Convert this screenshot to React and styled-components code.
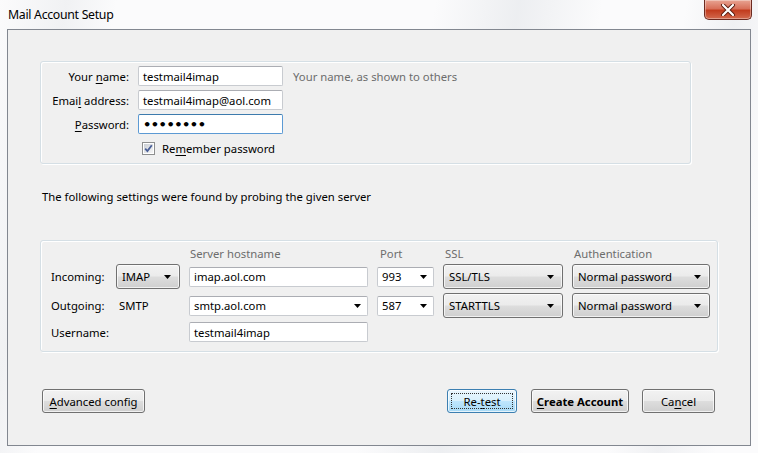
import React from 'react';
import styled, { createGlobalStyle, css } from 'styled-components';

const GlobalStyle = createGlobalStyle`
  html, body {
    margin: 0;
    padding: 0;
    background: #ffffff;
  }
  * { box-sizing: border-box; }
`;

const uiFont = `"Noto Sans", "Open Sans", Arial, sans-serif`;

const Window = styled.div`
  width: 758px;
  height: 453px;
  display: flex;
  flex-direction: column;
  font-family: ${uiFont};
  font-size: 11.3px;
  color: #000;
  background:
    linear-gradient(100deg, rgba(255,255,255,0) 0%, rgba(230,232,235,0.5) 8%, rgba(255,255,255,0) 14%,
      rgba(255,255,255,0) 52%, rgba(225,228,232,0.55) 62%, rgba(255,255,255,0) 72%,
      rgba(255,255,255,0) 82%, rgba(228,230,234,0.5) 88%, rgba(255,255,255,0) 95%),
    #fbfbfc;
`;

const TitleBar = styled.div`
  height: 29px;
  display: flex;
  align-items: flex-start;
  justify-content: space-between;
  padding: 0 6px 0 8px;
`;

const Title = styled.div`
  margin-top: 6px;
  font-size: 12.3px;
  letter-spacing: -0.3px;
  color: #000;
`;

const CloseButton = styled.div`
  width: 48px;
  height: 20px;
  border: 1px solid #6b2a20;
  border-top: none;
  border-radius: 0 0 5px 5px;
  background: linear-gradient(#e8a493 0%, #d8705a 45%, #c23c1e 55%, #d36a4e 100%);
  box-shadow: inset 0 0 0 1px rgba(255,255,255,0.35);
  display: flex;
  align-items: center;
  justify-content: center;
`;

const Client = styled.div`
  flex: 1;
  margin: 0 7px 7px 7px;
  border: 1px solid #828790;
  background: #f0f0f0;
  display: flex;
  flex-direction: column;
  padding: 31px 32px 0 32px;
`;

const GroupBox = styled.div`
  border: 1px solid #d5dfe5;
  border-radius: 3px;
  box-shadow: inset 1px 1px 0 #fff, 1px 1px 0 #fff;
  width: ${p => p.$width}px;
  height: ${p => p.$height}px;
`;

const IdentityGrid = styled.div`
  display: grid;
  grid-template-columns: 88px 145px auto;
  grid-auto-rows: 20px;
  column-gap: 9px;
  row-gap: 4px;
  padding-top: 4px;
  align-items: center;
`;

const Label = styled.div`
  text-align: ${p => (p.$right ? 'right' : 'left')};
  white-space: nowrap;
  color: #000;
`;

const Hint = styled.div`
  color: #6d6d6d;
  padding-left: 1px;
  white-space: nowrap;
`;

const TextBox = styled.div`
  height: 20px;
  background: #fff;
  border: 1px solid ${p => (p.$focused ? '#5c9ad4' : '#c8cbd0')};
  border-top-color: ${p => (p.$focused ? '#3d7bad' : '#abadb3')};
  border-radius: 2px;
  display: flex;
  align-items: center;
  padding: 0 4px;
  white-space: nowrap;
  overflow: hidden;
  ${p => p.$combo && css`justify-content: space-between; padding-right: 6px;`}
`;

const Dots = styled.span`
  font-size: 13px;
  font-weight: bold;
  letter-spacing: -0.5px;
  font-family: "DejaVu Sans", sans-serif;
`;

const CheckRow = styled.div`
  grid-column: 2 / 4;
  display: flex;
  align-items: center;
  gap: 7px;
  padding-left: 4px;
  margin-top: 1px;
`;

const Note = styled.div`
  margin-top: 22px;
  padding-left: 2px;
  height: 20px;
  display: flex;
  align-items: center;
`;

const ServerGroup = styled(GroupBox)`
  margin-top: 34px;
  padding: 5px 0 0 10px;
`;

const ServerGrid = styled.div`
  display: grid;
  grid-template-columns: 56px 64px 179px 57px 120px 138px;
  grid-template-rows: 14px 25px 25px 20px;
  column-gap: 9px;
  row-gap: 4px;
  align-items: center;
`;

const HeaderCell = styled.div`
  grid-column: ${p => p.$col};
  color: #6d6d6d;
  white-space: nowrap;
  padding-left: ${p => p.$pad || 1}px;
`;

const DropButton = styled.div`
  height: 25px;
  border: 1px solid #707070;
  border-radius: 3px;
  background: linear-gradient(#f2f2f2 0%, #ebebeb 48%, #dddddd 52%, #cfcfcf 100%);
  box-shadow: inset 0 0 0 1px rgba(255,255,255,0.7);
  display: flex;
  align-items: center;
  justify-content: space-between;
  padding: 0 8px 0 5px;
  white-space: nowrap;
`;

const Arrow = () => (
  <svg width="7" height="4" viewBox="0 0 7 4">
    <path d="M0 0 H7 L3.5 4 Z" fill="#000" />
  </svg>
);

const ButtonRow = styled.div`
  margin-top: 37px;
  margin-left: 2px;
  display: flex;
  align-items: center;
`;

const PushButton = styled.div`
  height: 24px;
  width: ${p => p.$width}px;
  margin-left: ${p => p.$gap || 0}px;
  border: 1px solid ${p => (p.$focused ? '#3c7fb1' : '#707070')};
  border-radius: 3px;
  background: ${p => (p.$focused
    ? 'linear-gradient(#eaf6fd 0%, #d9f0fc 48%, #bee6fd 52%, #a7d9f5 100%)'
    : 'linear-gradient(#f2f2f2 0%, #ebebeb 48%, #dddddd 52%, #cfcfcf 100%)')};
  box-shadow: inset 0 0 0 1px rgba(255,255,255,0.7);
  display: flex;
  align-items: center;
  justify-content: center;
  white-space: nowrap;
  font-weight: ${p => (p.$bold ? 'bold' : 'normal')};
  position: relative;
  ${p => p.$focused && css`
    &::after {
      content: '';
      position: absolute;
      inset: 3px;
      border: 1px dotted #333;
    }
  `}
`;

const Spacer = styled.div`
  flex: 1;
`;

const U = styled.span`
  text-decoration: underline;
  text-underline-offset: 2px;
`;

const CloseGlyph = () => (
  <svg width="16" height="12" viewBox="0 0 16 12">
    <path d="M3 1 L13 11 M13 1 L3 11" stroke="#5a1c10" strokeWidth="4" strokeLinecap="round" />
    <path d="M3 1 L13 11 M13 1 L3 11" stroke="#fff" strokeWidth="2.2" strokeLinecap="round" />
  </svg>
);

const CheckBox = () => (
  <svg width="13" height="13" viewBox="0 0 13 13">
    <defs>
      <linearGradient id="cbg" x1="0" y1="0" x2="1" y2="1">
        <stop offset="0" stopColor="#cbcfd5" />
        <stop offset="1" stopColor="#f6f6f6" />
      </linearGradient>
    </defs>
    <rect x="0.5" y="0.5" width="12" height="12" fill="#fff" stroke="#8e8f8f" />
    <rect x="2" y="2" width="9" height="9" fill="url(#cbg)" />
    <path d="M3.2 6.6 L5.4 9 L9.8 3.2" fill="none" stroke="#4a5f97" strokeWidth="1.8" />
  </svg>
);

export default function App() {
  return (
    <>
      <GlobalStyle />
      <Window>
        <TitleBar>
          <Title>Mail Account Setup</Title>
          <CloseButton><CloseGlyph /></CloseButton>
        </TitleBar>
        <Client>
          <GroupBox $width={651} $height={103}>
            <IdentityGrid>
              <Label $right>Your <U>n</U>ame:</Label>
              <TextBox>testmail4imap</TextBox>
              <Hint>Your name, as shown to others</Hint>

              <Label $right>Emai<U>l</U> address:</Label>
              <TextBox>testmail4imap@aol.com</TextBox>
              <div />

              <Label $right><U>P</U>assword:</Label>
              <TextBox $focused><Dots>••••••••</Dots></TextBox>
              <div />

              <div />
              <CheckRow>
                <CheckBox />
                <span>Re<U>m</U>ember password</span>
              </CheckRow>
            </IdentityGrid>
          </GroupBox>

          <Note>The following settings were found by probing the given server</Note>

          <ServerGroup $width={678} $height={112}>
            <ServerGrid>
              <HeaderCell $col={3}>Server hostname</HeaderCell>
              <HeaderCell $col={4} $pad={3}>Port</HeaderCell>
              <HeaderCell $col={5} $pad={2}>SSL</HeaderCell>
              <HeaderCell $col={6} $pad={2}>Authentication</HeaderCell>

              <Label>Incoming:</Label>
              <DropButton>IMAP <Arrow /></DropButton>
              <TextBox>imap.aol.com</TextBox>
              <TextBox $combo>993 <Arrow /></TextBox>
              <DropButton>SSL/TLS <Arrow /></DropButton>
              <DropButton>Normal password <Arrow /></DropButton>

              <Label>Outgoing:</Label>
              <Label>&nbsp;SMTP</Label>
              <TextBox $combo>smtp.aol.com <Arrow /></TextBox>
              <TextBox $combo>587 <Arrow /></TextBox>
              <DropButton>STARTTLS <Arrow /></DropButton>
              <DropButton>Normal password <Arrow /></DropButton>

              <Label>Username:</Label>
              <div />
              <TextBox>testmail4imap</TextBox>
            </ServerGrid>
          </ServerGroup>

          <ButtonRow>
            <PushButton $width={103}><U>A</U>dvanced config</PushButton>
            <Spacer />
            <PushButton $width={70} $focused>Re-<U>t</U>est</PushButton>
            <PushButton $width={98} $gap={14} $bold><U>C</U>reate Account</PushButton>
            <PushButton $width={73} $gap={13}>Ca<U>n</U>cel</PushButton>
            <div style={{ width: 3 }} />
          </ButtonRow>
        </Client>
      </Window>
    </>
  );
}
